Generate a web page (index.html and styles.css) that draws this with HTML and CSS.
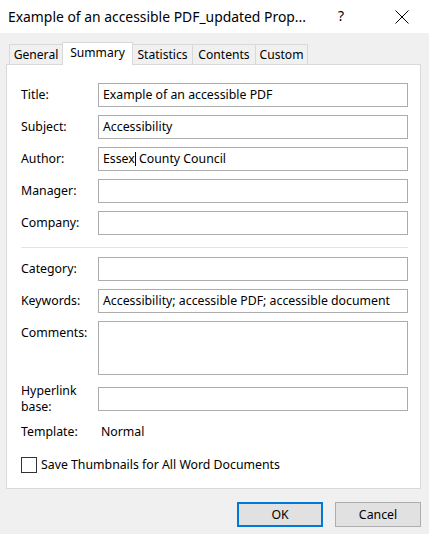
FILE: index.html
```html
<!DOCTYPE html>
<html lang="en">
<head>
<meta charset="utf-8">
<title>Properties</title>
<link rel="stylesheet" href="styles.css">
</head>
<body>
<div class="dialog">
  <div class="titlebar">
    <span class="title">Example of an accessible PDF_updated Prop...</span>
    <span class="help">?</span>
    <span class="close">
      <svg width="14" height="14" viewBox="0 0 14 14"><path d="M0.5 0.5 L13.5 13.5 M13.5 0.5 L0.5 13.5" stroke="#000" stroke-width="1" fill="none"/></svg>
    </span>
  </div>
  <div class="content">
    <div class="tabs">
      <div class="tab tab-general">General</div>
      <div class="tab tab-summary selected">Summary</div>
      <div class="tab tab-statistics">Statistics</div>
      <div class="tab tab-contents">Contents</div>
      <div class="tab tab-custom">Custom</div>
    </div>
    <div class="panel">
      <div class="row"><div class="label">Title:</div><div class="input">Example of an accessible PDF</div></div>
      <div class="row"><div class="label">Subject:</div><div class="input">Accessibility</div></div>
      <div class="row"><div class="label">Author:</div><div class="input">Essex<span class="caret"></span> County Council</div></div>
      <div class="row"><div class="label">Manager:</div><div class="input"></div></div>
      <div class="row"><div class="label">Company:</div><div class="input"></div></div>
      <div class="separator"></div>
      <div class="row first-after-sep"><div class="label">Category:</div><div class="input"></div></div>
      <div class="row"><div class="label">Keywords:</div><div class="input">Accessibility; accessible PDF; accessible document</div></div>
      <div class="row"><div class="label">Comments:</div><div class="input textarea"></div></div>
      <div class="row row-hyperlink"><div class="label label-two">Hyperlink<br>base:</div><div class="input"></div></div>
      <div class="row row-template"><div class="label">Template:</div><div class="value">Normal</div></div>
      <div class="check-row"><span class="checkbox"></span><span class="check-label">Save Thumbnails for All Word Documents</span></div>
    </div>
    <div class="buttons">
      <div class="button default">OK</div>
      <div class="button">Cancel</div>
    </div>
  </div>
</div>
</body>
</html>
```
FILE: styles.css
```css
* { box-sizing: border-box; }
html, body { margin: 0; padding: 0; }
body {
  font-family: "Noto Sans", "Open Sans", sans-serif;
  font-size: 12.3px;
  color: #000;
  background: #f0f0f0;
}
.dialog {
  width: 429px;
  height: 534px;
  background: #f0f0f0;
  overflow: hidden;
}
.titlebar {
  height: 33px;
  background: #fff;
  display: flex;
  align-items: center;
  padding-left: 8px;
}
.title {
  font-size: 13.9px;
  line-height: 33px;
  width: 330px;
  white-space: nowrap;
}
.help {
  font-size: 14px;
  line-height: 33px;
  width: 57px;
  margin-top: -2px;
}
.close {
  display: flex;
  width: 14px;
  height: 14px;
}
.close svg { display: block; }
.content {
  padding: 0 8px 0 6px;
}
.tabs {
  height: 31px;
  display: flex;
  align-items: flex-end;
  padding-left: 3px;
}
.tab {
  height: 20px;
  border: 1px solid #d9d9d9;
  border-bottom: none;
  background: #f0f0f0;
  text-align: center;
  line-height: 19px;
  font-size: 12.1px;
  white-space: nowrap;
  margin-left: -1px;
}
.tab-general { width: 54px; margin-left: 0; }
.tab-summary { width: 71px; }
.tab-statistics { width: 61px; }
.tab-contents { width: 64px; }
.tab-custom { width: 53px; }
.tab.selected {
  height: 23px;
  background: #fff;
  margin-bottom: -1px;
  padding-bottom: 3px;
  position: relative;
  z-index: 1;
}
.panel {
  width: 415px;
  height: 425px;
  background: #fff;
  border: 1px solid #d9d9d9;
  padding: 18px 12px 0 14px;
}
.row {
  display: flex;
  align-items: flex-start;
  margin-top: 8px;
}
.row:first-child { margin-top: 0; }
.label {
  width: 77px;
  flex: none;
  line-height: 24px;
  white-space: nowrap;
}
.label-two {
  line-height: 16px;
  margin: -4px 0;
}
.row-hyperlink { margin-top: 12px; }
.input {
  flex: 1;
  height: 24px;
  border: 1px solid #acacac;
  padding: 0 4px;
  line-height: 22px;
  white-space: nowrap;
  overflow: hidden;
}
.input.textarea { height: 54px; }
.caret {
  display: inline-block;
  width: 1px;
  height: 14px;
  background: #000;
  vertical-align: -3px;
}
.separator {
  height: 1px;
  background: #e3e3e3;
  margin: 12px 0 9px;
}
.first-after-sep { margin-top: 0; }
.row-template { margin-top: 9px; }
.value {
  line-height: 24px;
  padding-left: 3px;
}
.check-row {
  display: flex;
  align-items: center;
  margin-top: 13px;
  height: 16px;
}
.checkbox {
  width: 16px;
  height: 16px;
  border: 1px solid #333;
  background: #fff;
  flex: none;
}
.check-label {
  margin-left: 4px;
  line-height: 16px;
}
.buttons {
  display: flex;
  justify-content: flex-end;
  gap: 12px;
  margin-top: 13px;
}
.button {
  width: 86px;
  height: 25px;
  background: #e1e1e1;
  border: 1px solid #adadad;
  text-align: center;
  line-height: 23px;
}
.button.default {
  border: 2px solid #0078d7;
  line-height: 21px;
}
```
